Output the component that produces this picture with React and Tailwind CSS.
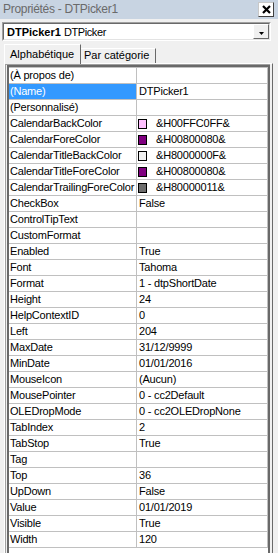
const props = [
  { name: "(À propos de)", value: "" },
  { name: "(Name)", value: "DTPicker1", selected: true },
  { name: "(Personnalisé)", value: "" },
  { name: "CalendarBackColor", value: "&H00FFC0FF&", swatch: "bg-[#ffc0ff]" },
  { name: "CalendarForeColor", value: "&H00800080&", swatch: "bg-[#800080]" },
  { name: "CalendarTitleBackColor", value: "&H8000000F&", swatch: "bg-[#f0f0f0]" },
  { name: "CalendarTitleForeColor", value: "&H00800080&", swatch: "bg-[#800080]" },
  { name: "CalendarTrailingForeColor", value: "&H80000011&", swatch: "bg-[#6d6d6d]" },
  { name: "CheckBox", value: "False" },
  { name: "ControlTipText", value: "" },
  { name: "CustomFormat", value: "" },
  { name: "Enabled", value: "True" },
  { name: "Font", value: "Tahoma" },
  { name: "Format", value: "1 - dtpShortDate" },
  { name: "Height", value: "24" },
  { name: "HelpContextID", value: "0" },
  { name: "Left", value: "204" },
  { name: "MaxDate", value: "31/12/9999" },
  { name: "MinDate", value: "01/01/2016" },
  { name: "MouseIcon", value: "(Aucun)" },
  { name: "MousePointer", value: "0 - cc2Default" },
  { name: "OLEDropMode", value: "0 - cc2OLEDropNone" },
  { name: "TabIndex", value: "2" },
  { name: "TabStop", value: "True" },
  { name: "Tag", value: "" },
  { name: "Top", value: "36" },
  { name: "UpDown", value: "False" },
  { name: "Value", value: "01/01/2019" },
  { name: "Visible", value: "True" },
  { name: "Width", value: "120" },
];

const PropRow = ({ item }) => (
  <div className="flex h-[16px] border-b border-[#c0c0c0]">
    <div
      className={
        item.selected
          ? "w-[128px] shrink-0 border-r border-[#c0c0c0] bg-[#3399ff] text-white pl-px leading-[15px] whitespace-nowrap overflow-hidden"
          : "w-[128px] shrink-0 border-r border-[#c0c0c0] pl-px leading-[15px] whitespace-nowrap overflow-hidden"
      }
    >
      {item.name}
    </div>
    <div className="flex-1 flex items-center border-r border-[#c0c0c0] pl-px leading-[15px] whitespace-nowrap overflow-hidden">
      {item.swatch && (
        <span className={`w-[9px] h-[10px] border border-black shrink-0 mr-[9px] ${item.swatch}`} />
      )}
      <span className={item.swatch ? "" : "pl-px"}>{item.value}</span>
    </div>
  </div>
);

const App = () => {
  return (
    <div className="w-[278px] h-[553px] overflow-hidden bg-[#f0f0f0] flex flex-col font-['Liberation_Sans',Arial,sans-serif] text-black">
      {/* title bar */}
      <div className="h-[19px] shrink-0 bg-[#c8d4e2] flex items-center justify-between pl-[3px] pr-[4px]">
        <span className="text-[12px] tracking-[-0.3px] text-[#6a6a6a] leading-[19px]">Propriétés - DTPicker1</span>
        <button className="w-[16px] h-[15px] bg-white border border-t-[#c8c8c8] border-l-[#c8c8c8] border-r-[#404040] border-b-[#404040] flex items-center justify-center">
          <svg width="9" height="9" viewBox="0 0 9 9">
            <path d="M1 1L8 8M8 1L1 8" stroke="black" strokeWidth="2.2" />
          </svg>
        </button>
      </div>

      {/* object combo */}
      <div className="mt-[3px] ml-[2px] mr-[7px] h-[19px] shrink-0 border border-t-[#a0a0a0] border-l-[#a0a0a0] border-r-white border-b-white">
        <div className="h-full bg-white flex items-center border border-t-[#696969] border-l-[#696969] border-r-[#e3e3e3] border-b-[#e3e3e3]">
          <span className="flex-1 pl-[3px] text-[11px] leading-[14px] whitespace-nowrap">
            <b className="font-bold">DTPicker1</b>{" "}
            <span className="tracking-[-0.4px]">DTPicker</span>
          </span>
          <div className="w-[16px] h-full bg-[#f0f0f0] border border-t-white border-l-white border-r-[#696969] border-b-[#696969] flex items-center justify-center pt-[3px]">
            <svg width="5" height="3" viewBox="0 0 5 3">
              <path d="M0 0H5L2.5 3Z" fill="black" />
            </svg>
          </div>
        </div>
      </div>

      {/* tabs */}
      <div className="mt-[3px] h-[20px] shrink-0 flex items-end pl-[4px] text-[11px]">
        <div className="relative z-10 h-[20px] w-[77px] bg-[#f0f0f0] border-l border-t border-white border-r border-r-[#696969] pl-[5px] pt-[2px] leading-[14px]">
          Alphabétique
        </div>
        <div className="h-[15px] w-[75px] mb-px border-t border-white border-r border-r-[#696969] pl-[3px] leading-[13px] whitespace-nowrap">
          Par catégorie
        </div>
      </div>

      {/* property grid */}
      <div className="-mt-px ml-[4px] mr-[5px] flex-1 flex flex-col border-l border-t border-white border-r border-r-[#696969] pr-[2px]">
        <div className="flex-1 flex flex-col border-l border-t border-[#a0a0a0] pl-px">
          <div className="flex-1 bg-white border-l-2 border-t-2 border-r-2 border-[#696969] text-[11px] tracking-[-0.2px]">
            <div className="border-t border-[#c0c0c0]">
              {props.map((item) => (
                <PropRow key={item.name} item={item} />
              ))}
            </div>
          </div>
        </div>
      </div>
    </div>
  );
};

export default App;
